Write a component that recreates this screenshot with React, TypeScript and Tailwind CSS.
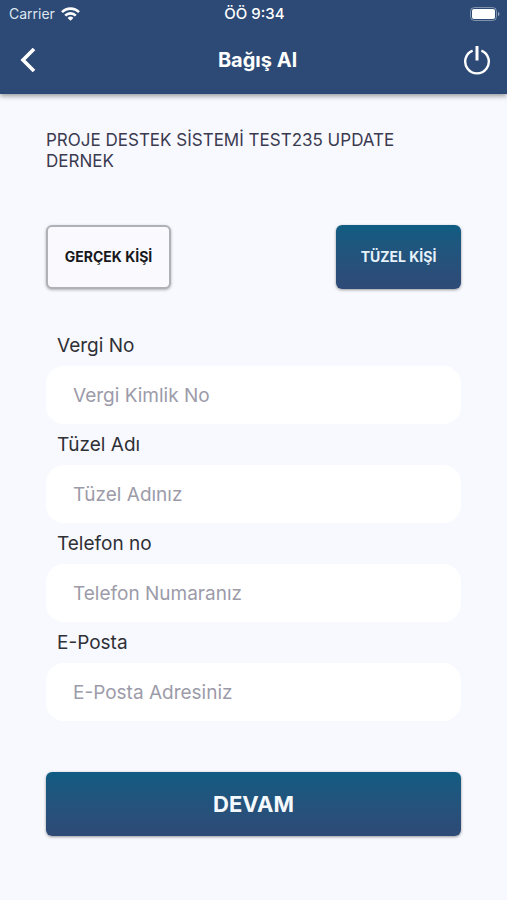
const fields = [
  { id: 'vergi-no', label: 'Vergi No', placeholder: 'Vergi Kimlik No', type: 'text' },
  { id: 'tuzel-adi', label: 'Tüzel Adı', placeholder: 'Tüzel Adınız', type: 'text' },
  { id: 'telefon', label: 'Telefon no', placeholder: 'Telefon Numaranız', type: 'tel' },
  { id: 'e-posta', label: 'E-Posta', placeholder: 'E-Posta Adresiniz', type: 'email' },
];

function WifiIcon() {
  return (
    <svg width="19" height="14" viewBox="0 0 19 14" fill="none" stroke="white" strokeWidth="2.6">
      <path d="M1 5.2a12 12 0 0 1 17 0" />
      <path d="M4.2 8.6a7.5 7.5 0 0 1 10.6 0" />
      <path d="M9.5 13.8 6.6 10.9a4.1 4.1 0 0 1 5.8 0z" fill="white" stroke="none" />
    </svg>
  );
}

function BatteryIcon() {
  return (
    <svg width="30" height="14" viewBox="0 0 30 14" fill="none">
      <rect x="0.5" y="0.5" width="26" height="13" rx="4" stroke="white" strokeOpacity="0.4" />
      <rect x="2" y="2" width="23" height="10" rx="2" fill="white" />
      <path d="M28 4.8c2 .8 2 3.6 0 4.4z" fill="white" fillOpacity="0.5" />
    </svg>
  );
}

function StatusBar() {
  return (
    <div className="grid h-7 grid-cols-3 items-center pl-[9px] pr-[7px] text-sm">
      <div className="flex items-center gap-[6px] text-[#dfe6f0]">
        <span>Carrier</span>
        <WifiIcon />
      </div>
      <span className="text-center text-[15px] font-medium">ÖÖ 9:34</span>
      <div className="flex justify-end">
        <BatteryIcon />
      </div>
    </div>
  );
}

export default function App() {
  return (
    <div className="min-h-screen bg-[#f8f9fe] font-['Inter',sans-serif]">
      <header className="bg-[#2c4a75] text-white shadow-[0_2px_5px_rgba(0,0,0,0.4)]">
        <StatusBar />
        <div className="flex h-[66px] items-center justify-between px-4 pb-[2px]">
          <button type="button" aria-label="Geri" className="flex w-10 justify-start pl-1">
            <svg width="16" height="24" viewBox="0 0 16 24" fill="none" stroke="white" strokeWidth="3.6">
              <path d="M14 1 3 12l11 11" />
            </svg>
          </button>
          <h1 className="text-xl font-bold">Bağış Al</h1>
          <button type="button" aria-label="Çıkış" className="flex w-8 justify-end">
            <svg width="28" height="30" viewBox="0 0 28 30" fill="none" stroke="white">
              <path d="M9.6 5.6a11.8 11.8 0 1 0 8.8 0" strokeWidth="2.4" />
              <path d="M14 1v14.5" strokeWidth="3" />
            </svg>
          </button>
        </div>
      </header>

      <main className="px-[46px] pt-9 pb-16">
        <p className="text-[17px] leading-[21px] text-[#3a3a50]">
          PROJE DESTEK SİSTEMİ TEST235 UPDATE DERNEK
        </p>

        <div className="mt-[53px] flex justify-between">
          <button
            type="button"
            className="h-16 w-[125px] rounded-md border-2 border-[#b0b1b6] bg-[#fafafe] text-sm font-bold text-[#18181c] shadow-[0_1px_3px_rgba(0,0,0,0.3)]"
          >
            GERÇEK KİŞİ
          </button>
          <button
            type="button"
            className="h-16 w-[125px] rounded-md bg-linear-to-b from-[#0f5c82] to-[#2e4a76] text-sm font-bold text-[#e6f1fa] shadow-[0_1px_3px_rgba(0,0,0,0.4)]"
          >
            TÜZEL KİŞİ
          </button>
        </div>

        <form className="mt-9">
          {fields.map((field) => (
            <div key={field.id}>
              <label
                htmlFor={field.id}
                className="block pl-[11px] text-[19px] leading-[41px] text-[#2f3036]"
              >
                {field.label}
              </label>
              <input
                id={field.id}
                type={field.type}
                placeholder={field.placeholder}
                className="block h-[58px] w-full rounded-[18px] bg-white px-[27px] text-[19px] text-[#2f3036] placeholder:text-[#9c9ba9]"
              />
            </div>
          ))}

          <button
            type="submit"
            className="mt-[51px] h-16 w-full rounded-md bg-linear-to-b from-[#0f5c82] to-[#2e4a76] text-[22px] font-bold text-[#f4f9fd] shadow-[0_1px_3px_rgba(0,0,0,0.4)]"
          >
            DEVAM
          </button>
        </form>
      </main>
    </div>
  );
}
